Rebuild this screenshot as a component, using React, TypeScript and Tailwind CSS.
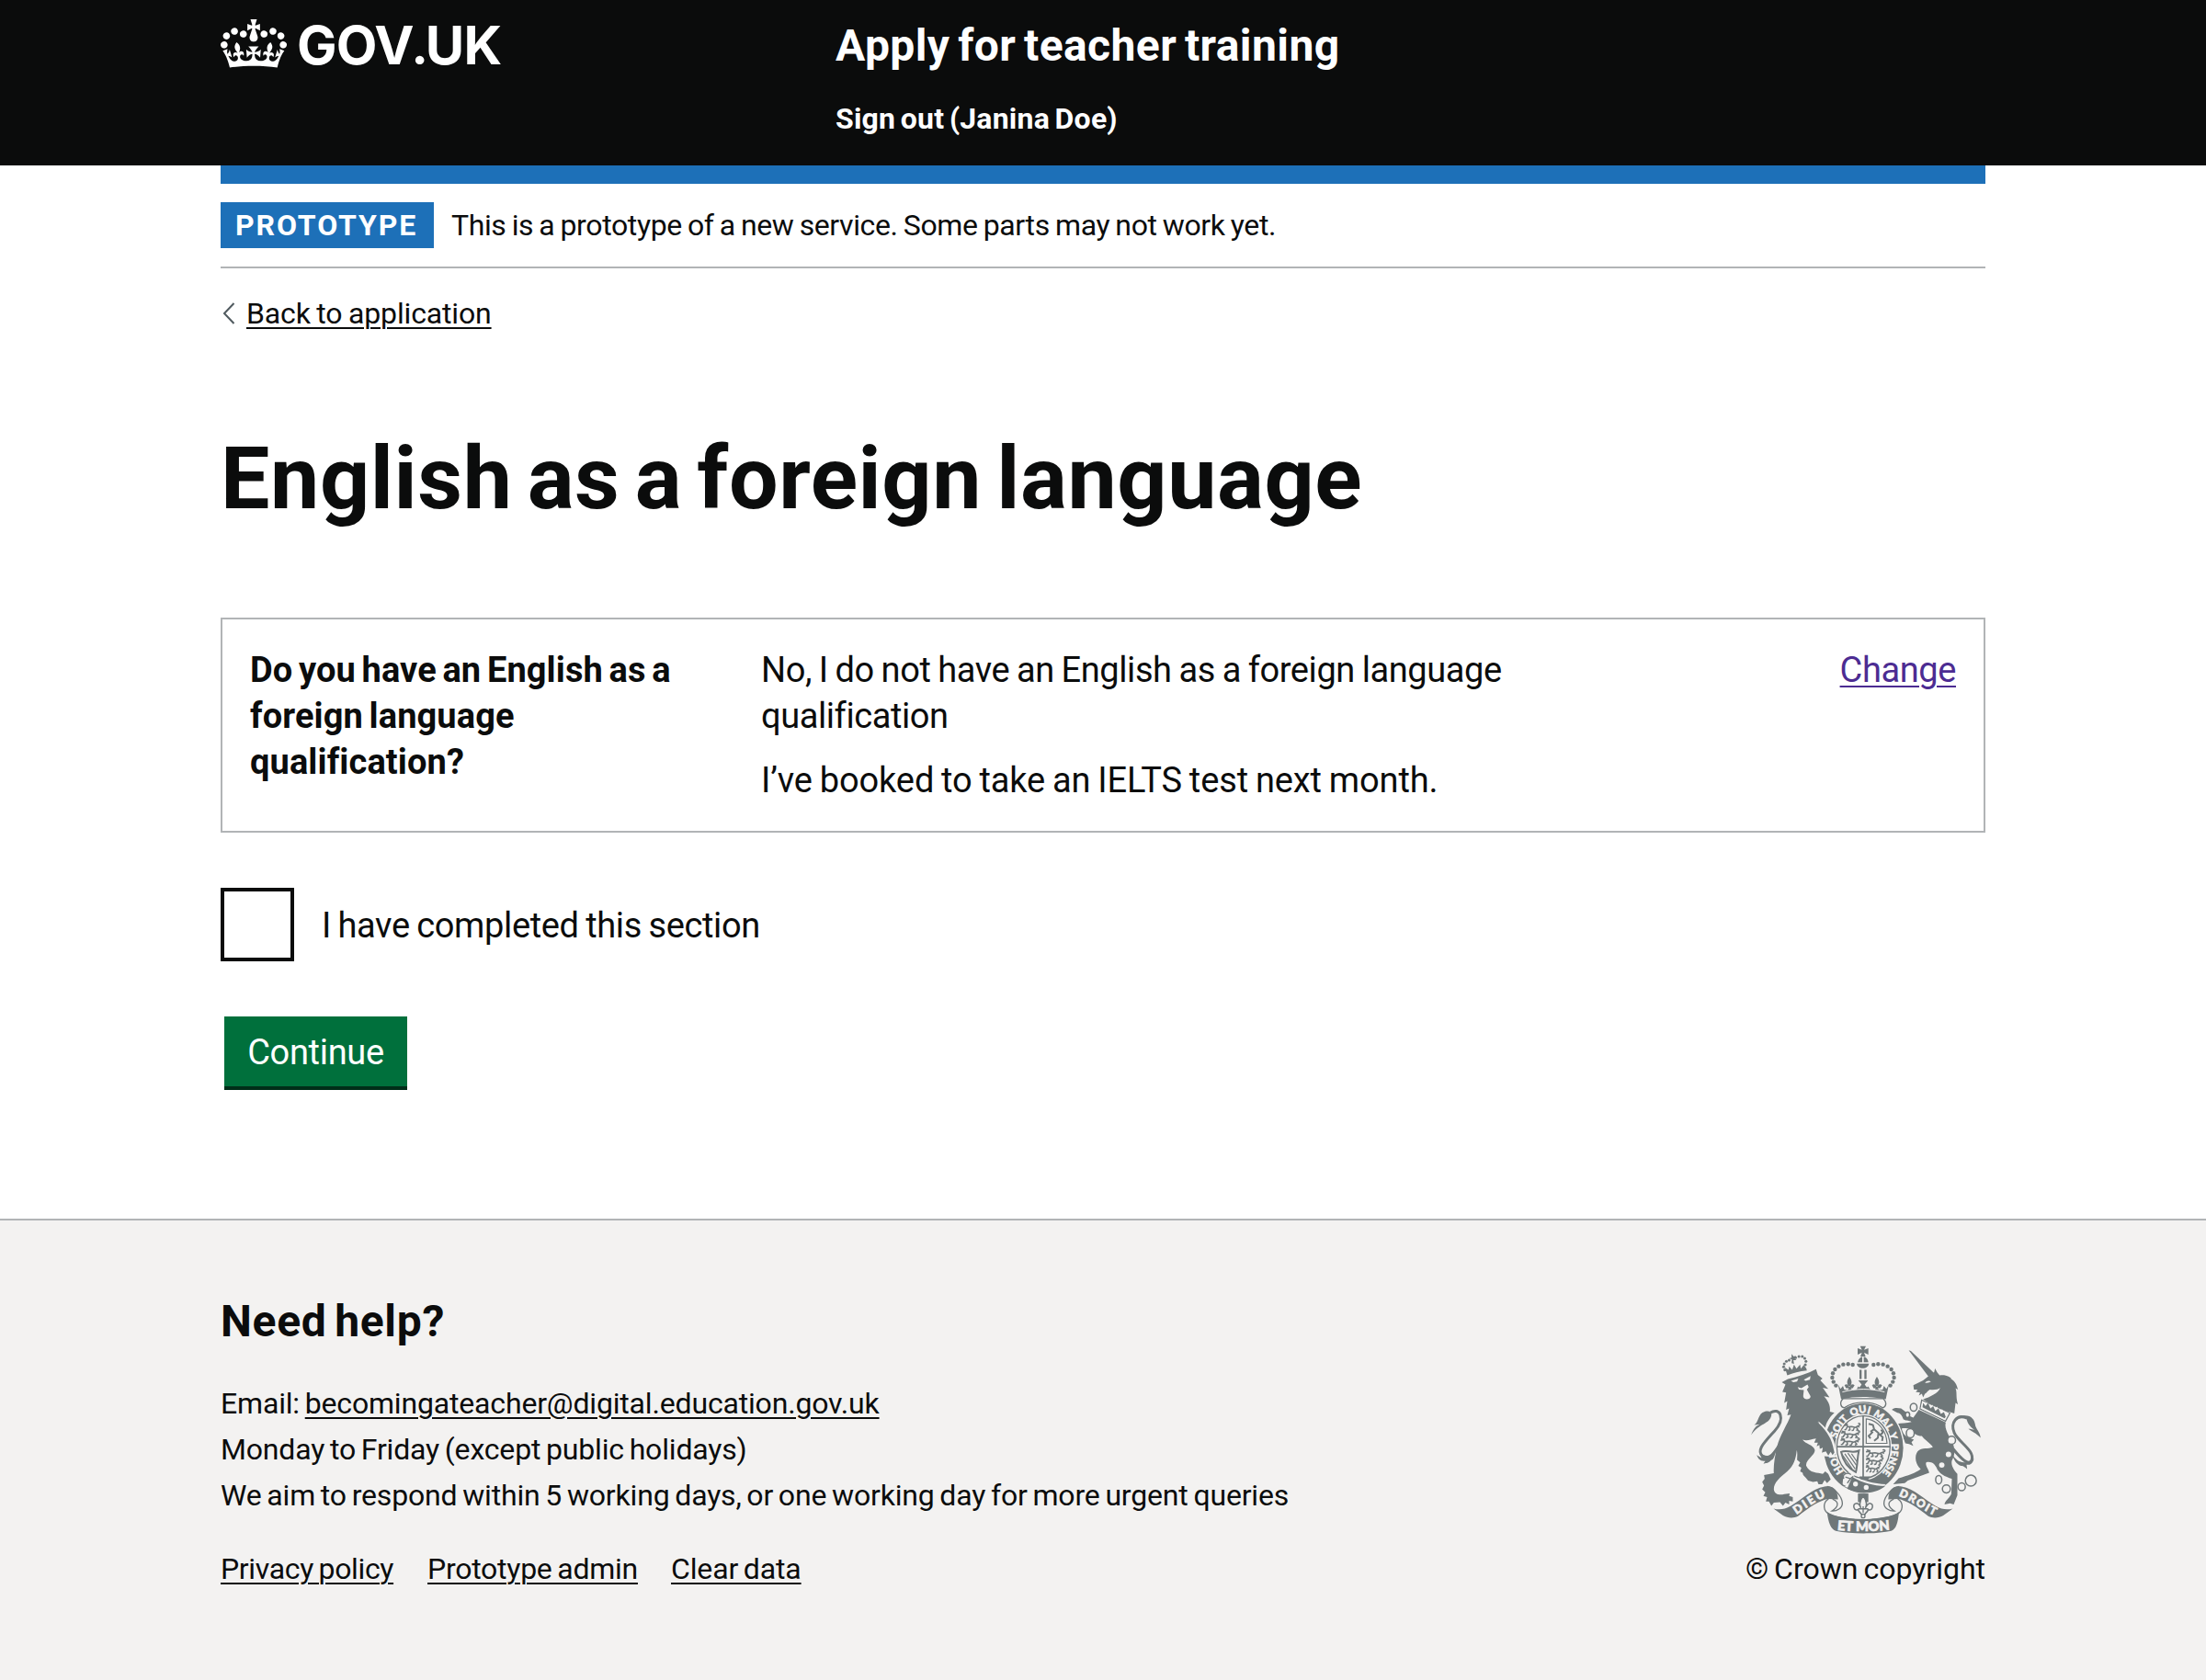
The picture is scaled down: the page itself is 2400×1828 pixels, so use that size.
const GREY = "#6f7779";
const PAPER = "#f3f2f1";

function CrownLogo() {
  return (
    <svg viewBox="0 0 132 97" className="mt-[21px] h-[53px] w-[72px] shrink-0" fill="#ffffff" aria-hidden="true">
      <path
        fillRule="evenodd"
        d="M25 30.2c3.5 1.5 7.7-.2 9.1-3.7 1.5-3.6-.2-7.8-3.9-9.2-3.6-1.4-7.6.3-9.1 3.9-1.4 3.5.3 7.5 3.9 9zM9 39.5c3.6 1.5 7.8-.2 9.2-3.7 1.5-3.6-.2-7.8-3.9-9.1-3.6-1.5-7.6.2-9.1 3.8-1.4 3.5.3 7.5 3.8 9zM4.4 57.2c3.5 1.5 7.7-.2 9.1-3.8 1.5-3.6-.2-7.7-3.9-9.1-3.5-1.5-7.6.3-9.1 3.8-1.4 3.5.3 7.6 3.9 9.1zm38.3-21.4c3.5 1.5 7.7-.2 9.1-3.8 1.5-3.6-.2-7.7-3.9-9.1-3.6-1.5-7.6.3-9.1 3.8-1.3 3.6.4 7.7 3.9 9.1zm64.4-5.6c-3.6 1.5-7.8-.2-9.1-3.7-1.5-3.6.2-7.8 3.8-9.2 3.6-1.4 7.7.3 9.2 3.9 1.3 3.5-.4 7.5-3.9 9zm15.9 9.3c-3.6 1.5-7.7-.2-9.1-3.7-1.5-3.6.2-7.8 3.7-9.1 3.6-1.5 7.7.2 9.2 3.8 1.5 3.5-.3 7.5-3.8 9zm4.7 17.7c-3.6 1.5-7.8-.2-9.2-3.8-1.5-3.6.2-7.7 3.9-9.1 3.6-1.5 7.7.3 9.2 3.8 1.3 3.5-.4 7.6-3.9 9.1zM89.3 35.8c-3.6 1.5-7.8-.2-9.2-3.8-1.4-3.6.2-7.7 3.9-9.1 3.6-1.5 7.7.3 9.2 3.8 1.4 3.6-.3 7.7-3.9 9.1zM69.7 17.7l8.9 4.7V9.3l-8.9 2.8c-.2-.3-.5-.6-.9-.9L72.4 0H59.6l3.5 11.2c-.3.3-.6.5-.9.9l-8.8-2.8v13.1l8.8-4.7c.3.3.6.7.9.9l-5 15.4v.1c-.2.8-.4 1.6-.4 2.4 0 4.1 3.1 7.5 7 8.1h.2c.3 0 .7.1 1 .1.4 0 .7 0 1-.1h.2c4-.6 7.1-4.1 7.1-8.1 0-.8-.1-1.7-.4-2.4V34l-5.1-15.4c.4-.2.7-.6 1-.9zM66 92.8c16.9 0 32.8 1.1 47.1 3.2 4-16.9 8.9-26.7 14-33.5l-9.6-3.4c1 4.9 1.1 7.2 0 10.2-1.5-1.4-3-4.3-4.2-8.7L108.6 76c2.8-2 5-3.2 7.5-3.3-4.4 9.4-10 11.9-13.6 11.2-4.3-.8-6.3-4.6-5.6-7.9 1-4.7 5.7-5.9 8-.5 4.3-8.7-3-11.4-7.6-8.8 7.1-7.2 7.9-13.5 2.1-21.1-8 6.1-8.1 12.3-4.5 20.8-4.7-5.4-12.1-2.5-9.5 6.2 3.4-5.2 7.9-2 7.2 3.1-.6 4.3-6.4 7.8-13.5 7.2-10.3-.9-10.9-8-11.2-13.8 2.5-.5 7.1 1.8 11 7.3L80.2 60c-4.1 4.4-8 5.3-12.3 5.4 1.4-4.4 8-11.6 8-11.6H55.5s6.4 7.2 7.9 11.6c-4.2-.1-8-1-12.3-5.4l1.4 16.4c3.9-5.5 8.5-7.7 10.9-7.3-.3 5.8-.9 12.8-11.1 13.8-7.2.6-12.9-2.9-13.5-7.2-.7-5 3.8-8.3 7.1-3.1 2.7-8.7-4.6-11.6-9.4-6.2 3.7-8.5 3.6-14.7-4.6-20.8-5.8 7.6-5 13.9 2.2 21.1-4.7-2.6-11.9.1-7.7 8.8 2.3-5.5 7.1-4.2 8.1.5.7 3.3-1.3 7.1-5.7 7.9-3.5.7-9-1.8-13.5-11.2 2.5.1 4.7 1.3 7.5 3.3l-4.7-15.4c-1.2 4.4-2.7 7.2-4.3 8.7-1.1-3-.9-5.3 0-10.2l-9.5 3.4c5 6.9 9.9 16.7 14 33.5 14.8-2.1 30.8-3.2 47.7-3.2z"
      />
    </svg>
  );
}

const crownBeads: [number, number][] = [
  [464, 133], [449, 131], [433, 132], [418, 138], [406, 148], [399, 161], [397, 175], [401, 189], [409, 201],
];
const lionCrownBeads: [number, number][] = [
  [256, 118], [247, 122], [240, 130], [238, 140], [242, 150], [277, 110], [288, 106], [299, 106], [307, 112], [311, 122], [309, 133],
];

function Ribbon() {
  return (
    <>
      <path
        fill={GREY}
        d="M205 603 C225 608 240 606 262 594 C300 572 330 539 372 531 C396 527 414 536 416 573 L385 572 C360 574 320 600 285 628 C270 636 250 634 236 626 Z"
      />
      <path
        fill="none"
        stroke={GREY}
        strokeWidth="4"
        d="M385 572 C368 580 366 604 380 617 C395 630 440 636 470 639 M380 531 C404 533 430 566 430 586 C430 602 412 612 396 611 C414 600 424 583 398 572"
      />
    </>
  );
}

function Walker({ x, y, s }: { x: number; y: number; s: number }) {
  return (
    <path
      transform={`translate(${x} ${y}) scale(${s} 1)`}
      fill="none"
      stroke={GREY}
      strokeWidth="4.6"
      strokeLinejoin="round"
      d="M2 6 L12 4 L16 10 L30 9 L44 12 L54 7 L58 12 M14 10 L8 19 L3 20 M22 10 L24 20 L17 22 M40 12 L36 21 L30 22 M48 12 L53 19 L47 22 M54 7 C66 4 60 -4 54 0 M4 0 L16 3"
    />
  );
}

function RoyalArms() {
  return (
    <svg viewBox="132 70 750 616" className="h-[205px] w-[250px]" role="img" aria-label="Royal coat of arms">
      {/* lion's tail */}
      <path fill="none" stroke={GREY} strokeWidth="9" d="M194 290 C226 270 246 308 208 350 C176 386 146 414 170 432 C196 450 214 410 246 362" />
      <path fill={GREY} d="M132 362 C142 338 148 334 160 328 L142 330 C158 318 154 292 176 286 C190 283 200 288 198 298 C192 328 160 322 132 362 Z" />
      <path fill={GREY} d="M150 428 L166 438 L160 424 C180 434 196 432 212 420 C206 436 206 442 196 446 C188 456 178 454 172 456 L178 448 C164 448 156 444 150 428 Z" />
      {/* lion */}
      <path
        fill={GREY}
        d="M232 190 L252 180 C284 172 316 162 344 147 L350 166 L365 178 L358 184 L384 212 L366 208 L388 240 L370 236 C384 252 392 268 389 286 L404 290 C386 306 376 324 374 342 L346 318 C372 344 398 372 402 396 C408 412 406 426 396 430 L390 420 L382 430 L374 418 L364 420 L366 404 L356 408 L358 394 L346 400 L350 388 L338 388 L344 374 C326 376 316 384 300 378 C308 392 336 394 340 412 C342 428 308 444 312 464 C322 488 350 486 366 490 L374 482 L384 490 L392 508 L380 520 L372 510 L364 524 L352 524 L348 514 L334 516 L318 512 L310 502 L302 494 L300 486 L292 482 L296 470 L286 464 L292 452 L282 444 C282 434 284 424 281 412 C278 440 272 462 250 482 C226 502 206 518 206 540 C208 558 226 560 240 556 L258 554 L256 562 L268 566 L268 580 L256 578 L256 590 L244 584 L236 594 L226 582 L206 584 L198 594 L190 580 L180 580 L184 566 L172 562 L178 550 L168 540 L174 528 L168 516 L176 506 L174 494 L206 488 C204 462 210 430 216 402 C226 362 250 330 262 296 L250 298 L256 276 L246 280 L250 252 L240 258 L246 224 L234 222 L244 198 Z"
      />
      <path fill={PAPER} d="M262 186 L286 178 L282 188 L270 190 Z M304 182 L326 170 L324 182 L310 186 Z M284 206 L296 210 L316 198 L320 206 L314 214 L326 236 C326 248 304 250 302 236 L304 216 L288 214 Z" />
      {/* lion's crown */}
      <g fill={GREY}>
        {lionCrownBeads.map(([x, y], i) => (
          <circle key={i} cx={x} cy={y} r="4.6" />
        ))}
        <path d="M242 142 L254 150 L256 138 L266 150 L272 132 L280 146 L292 132 L294 146 L304 134 L312 144 L314 152 C290 154 268 160 250 168 Z" />
        <path d="M264 98 L271 106 L278 104 L274 112 L280 118 L270 118 L272 130 L264 128 L265 116 L256 112 L264 110 Z" />
      </g>

      {/* unicorn's tail */}
      <path fill="none" stroke={GREY} strokeWidth="9" d="M838 308 C804 292 782 322 796 356 C808 384 864 414 853 444 C844 466 818 440 792 408" />
      <path fill={GREY} d="M820 300 C850 294 862 312 864 328 C866 344 880 352 882 372 C868 356 852 352 842 342 L862 346 C846 336 838 322 836 310 Z" />
      <path fill={GREY} d="M788 424 C800 444 812 452 828 452 C842 452 852 446 860 440 C858 450 854 456 846 460 L836 460 L838 474 C828 466 824 462 818 464 C802 458 794 444 788 424 Z" />
      {/* unicorn */}
      <path fill={GREY} d="M647 86 L654 88 L730 160 L712 172 Z" />
      <path
        fill={GREY}
        d="M694 184 L712 170 L730 158 L733 145 L740 158 L748 168 C768 164 784 174 788 180 L782 178 C800 186 804 200 808 214 L800 210 C806 226 800 240 808 262 L800 258 L796 292 C764 284 726 270 694 246 C716 238 744 226 750 208 C744 214 728 216 716 214 C708 218 706 226 700 228 L694 240 L690 228 L680 234 L684 224 L670 222 L676 214 L664 214 L662 200 Z"
      />
      <path fill={PAPER} d="M700 192 C706 184 714 184 720 188 C714 190 710 194 700 192 Z" />
      <path fill={GREY} d="M688 246 L784 290 L768 320 L682 278 Z" />
      <path fill={PAPER} d="M692 252 L702 268 L708 256 L716 274 L724 264 L732 280 L740 270 L748 288 L756 278 L764 294 L778 292 L766 314 L686 276 Z" />
      <path fill={PAPER} d="M691 251 L779 291 L766 315 L686 276 Z" />
      <path fill={GREY} d="M694 258 L702 268 L710 258 L718 276 L727 268 L734 284 L744 276 L752 294 L762 288 L768 304 L764 308 L692 272 Z" />
      <path
        fill={GREY}
        d="M680 280 L768 322 C762 344 780 366 792 392 C800 416 796 432 788 446 C784 462 796 478 806 490 L806 560 L794 590 L782 586 L764 590 C766 576 776 574 786 556 L788 506 C766 500 744 488 738 470 C732 458 722 448 704 452 C700 462 712 474 714 486 L644 512 L634 520 L596 524 L614 504 C642 496 672 486 686 474 C670 460 664 432 676 416 C690 402 712 410 726 402 C716 388 698 378 690 366 C674 366 658 354 654 344 C640 340 628 340 624 342 C628 358 634 366 648 372 L664 378 L656 386 L662 398 L648 392 L636 390 L628 370 C616 356 606 342 608 326 C622 324 642 324 656 320 C650 314 640 318 630 312 C624 298 622 292 610 290 L592 280 C598 272 612 274 622 276 L638 288 C644 300 652 302 662 306 Z"
      />
      {/* chain */}
      <g fill="none" stroke={GREY} strokeWidth="4.5">
        <ellipse cx="663" cy="272" rx="11" ry="13" />
        <ellipse cx="652" cy="357" rx="13" ry="15" fill={PAPER} />
        <ellipse cx="643" cy="297" rx="7" ry="9" fill={PAPER} />
        <circle cx="787" cy="380" r="13" fill={PAPER} />
        <ellipse cx="745" cy="509" rx="10" ry="14" />
        <circle cx="770" cy="539" r="13" />
        <ellipse cx="820" cy="532" rx="12" ry="13" fill={PAPER} />
        <circle cx="850" cy="512" r="18" />
      </g>
      <circle cx="777" cy="426" r="9" fill={PAPER} />
      <circle cx="755" cy="461" r="9" fill={PAPER} />

      {/* garter and shield */}
      <ellipse cx="499" cy="405" rx="134" ry="150" fill={PAPER} />
      <ellipse cx="499" cy="405" rx="130" ry="146" fill={GREY} />
      <ellipse cx="499" cy="402" rx="93" ry="108" fill={PAPER} />
      <ellipse cx="499" cy="402" rx="87" ry="102" fill="none" stroke={GREY} strokeWidth="4" />
      <path stroke={GREY} strokeWidth="5" d="M498 300 V506 M412 401 H586" />
      <Walker x={434} y={326} s={0.88} />
      <Walker x={424} y={350} s={1.02} />
      <Walker x={422} y={374} s={1.04} />
      <Walker x={505} y={412} s={1.05} />
      <Walker x={505} y={437} s={0.95} />
      <Walker x={505} y={462} s={0.78} />
      <path fill="none" stroke={GREY} strokeWidth="3.5" d="M508 310 C544 314 574 346 576 390 H508 Z" />
      <path fill="none" stroke={GREY} strokeWidth="6" strokeLinejoin="round" d="M516 326 L530 330 L534 344 L522 352 M534 344 L548 356 L546 372 L534 382 M548 358 L562 370 L560 382 M530 352 L516 366 L522 374 M556 346 C566 352 560 362 554 358" />
      <path fill="none" stroke={GREY} strokeWidth="6" d="M426 418 C444 410 462 424 484 414 C478 440 480 462 474 484 C450 472 432 448 426 418 Z" />
      <path stroke={GREY} strokeWidth="3.5" d="M438 424 L472 474 M448 422 L476 462 M460 424 L478 450 M432 430 L462 474" />
      <path fill={GREY} d="M486 498 H520 L514 510 H488 Z" />

      <path id="garter" fill="none" d="M499 519 A100 115 0 0 1 499 290 A100 115 0 0 1 499 519" />
      <g
        fill={PAPER}
        stroke={PAPER}
        strokeWidth="1.6"
        fontFamily="Lato, sans-serif"
        fontWeight="900"
        fontSize="33"
        textAnchor="middle"
      >
        <text><textPath href="#garter" startOffset="18%">HON</textPath></text>
        <text><textPath href="#garter" startOffset="35.6%">SOIT</textPath></text>
        <text><textPath href="#garter" startOffset="48.4%">QUI</textPath></text>
        <text><textPath href="#garter" startOffset="60.6%">MAL</textPath></text>
        <text><textPath href="#garter" startOffset="69.4%">Y</textPath></text>
        <text><textPath href="#garter" startOffset="81%">PENSE</textPath></text>
      </g>
      {/* paw over the garter */}
      <path fill={PAPER} d="M352 318 C382 344 400 366 406 396 L410 422 L400 434 L370 432 L366 420 Z" />
      <path fill={GREY} d="M346 318 C372 342 392 368 399 398 L404 420 L398 428 L392 418 L384 430 L376 416 L364 420 L366 404 L356 406 Z" />
      {/* buckle and strap */}
      <path fill={PAPER} d="M434 490 L462 484 L470 500 C500 514 540 522 572 524 L560 534 C520 532 480 520 462 512 L450 536 L430 530 Z" />
      <path fill={GREY} d="M462 500 C492 518 530 528 570 530 C540 556 480 560 446 538 Z" />
      <path fill="none" stroke={GREY} strokeWidth="4" d="M458 492 C446 484 430 490 434 504 C420 508 424 528 440 530 M440 500 L458 506 M446 520 C452 514 456 502 466 498" />
      <circle cx="473" cy="523" r="8" fill={PAPER} />
      <circle cx="508" cy="534" r="8" fill={PAPER} />

      {/* imperial crown */}
      <path fill={PAPER} stroke={GREY} strokeWidth="4" d="M432 244 C420 256 424 272 436 274 C470 250 528 250 562 274 C574 270 576 256 564 244 Z" />
      <g fill={GREY}>
        <path d="M416 198 L424 212 L432 202 L436 214 L448 216 L454 204 L462 216 L476 214 L482 204 L490 212 L506 212 L514 204 L522 214 L536 216 L542 204 L550 216 L562 214 L566 202 L574 212 L582 198 L572 246 C524 236 472 236 426 246 Z" />
        <path d="M453 172 C462 186 462 192 456 202 H450 C444 192 444 186 453 172 Z M543 172 C552 186 552 192 546 202 H540 C534 192 534 186 543 172 Z" />
        <path d="M482 184 H514 L503 198 L514 212 H482 L493 198 Z" />
        <path d="M437 200 C444 192 450 200 453 206 C456 200 462 192 470 200 L464 210 H442 Z M527 200 C534 192 540 200 543 206 C546 200 552 192 560 200 L554 210 H532 Z" />
        <path d="M486 150 H493 V180 H486 Z M502 150 H509 V180 H502 Z" />
        <path d="M477 129 H517 C516 138 508 144 497 144 C486 144 478 138 477 129 Z M480 125 C482 114 490 108 495 107 V125 Z M500 107 C506 108 514 114 515 125 H500 Z" />
        <path d="M488 72 H507 L501 84 L515 79 V100 L501 93 L506 106 H489 L494 93 L480 100 V79 L494 84 Z" />
        {crownBeads.map(([x, y], i) => (
          <g key={i}>
            <circle cx={x} cy={y} r="6.6" />
            <circle cx={996 - x} cy={y} r="6.6" />
          </g>
        ))}
      </g>
      <path fill="none" stroke={PAPER} strokeWidth="3" d="M430 222 C474 210 524 210 568 222" />

      {/* motto */}
      <Ribbon />
      <g transform="translate(996 0) scale(-1 1)">
        <Ribbon />
      </g>
      <path fill={GREY} d="M380 614 C420 646 576 646 615 614 C612 650 606 670 590 676 C540 687 460 687 408 676 C392 670 384 650 380 614 Z" />
      <path id="motto-left" fill="none" d="M274 627 C306 606 342 578 382 562" />
      <path id="motto-mid" fill="none" d="M400 671 C450 679 545 679 598 671" />
      <path id="motto-right" fill="none" d="M608 560 C656 576 690 608 736 628" />
      <g fill={PAPER} stroke={PAPER} strokeWidth="2" fontFamily="Lato, sans-serif" fontWeight="900" textAnchor="middle">
        <text fontSize="38"><textPath href="#motto-left" startOffset="50%" textLength="112">DIEU</textPath></text>
        <text fontSize="44"><textPath href="#motto-mid" startOffset="50%" textLength="172">ET MON</textPath></text>
        <text fontSize="36"><textPath href="#motto-right" startOffset="50%" textLength="134">DROIT</textPath></text>
      </g>
      <path fill={GREY} d="M481 554 H515 V582 H481 Z" />
      <path fill={PAPER} stroke={GREY} strokeWidth="4.5" strokeLinejoin="round" d="M498 562 C508 574 512 586 506 600 C514 580 532 584 528 600 C526 608 518 610 514 606 C514 614 506 616 504 622 H492 C490 616 482 614 482 606 C478 610 470 608 468 600 C464 584 482 580 490 600 C484 586 488 574 498 562 Z" />
      <path stroke={GREY} strokeWidth="4" d="M498 596 V618 M482 604 H514" />
      <circle cx="498" cy="628" r="6" fill={PAPER} stroke={GREY} strokeWidth="4" />
    </svg>
  );
}

const link = "underline decoration-2 underline-offset-[4px]";

export default function App() {
  return (
    <div className="flex h-[1828px] w-full flex-col overflow-hidden bg-white font-[Roboto,sans-serif] text-[32px] leading-[50px] text-[#0b0c0c]">
      <header className="h-[180px] shrink-0 bg-[#0b0c0c] text-white">
        <div className="mx-auto flex w-[1920px]">
          <a className="flex w-[670px] items-start">
            <CrownLogo />
            <span className="mt-[18px] ml-[11px] font-[Inter,sans-serif] text-[58px] leading-[60px] font-bold tracking-[-0.8px] whitespace-nowrap">
              GOV<span className="font-[Lato,sans-serif] font-black">.</span>UK
            </span>
          </a>
          <div className="flex flex-col pt-5 font-bold">
            <span className="-ml-px text-[48px] leading-[60px] tracking-[0.4px] [word-spacing:-3.5px]">Apply for teacher training</span>
            <span className="mt-6 -ml-px tracking-[0.2px] [word-spacing:-2.5px]">Sign out (Janina Doe)</span>
          </div>
        </div>
      </header>

      <div className="mx-auto w-[1920px] shrink-0">
        <div className="h-5 bg-[#1d70b8]" />
        <div className="flex items-center border-b-2 border-[#b1b4b6] py-5">
          <strong className="w-[232px] bg-[#1d70b8] pl-4 font-bold tracking-[1.9px] text-white">PROTOTYPE</strong>
          <span className="ml-[19px] tracking-[-0.38px] [word-spacing:-1.4px]">
            This is a prototype of a new service. Some parts may not work yet.
          </span>
        </div>

        <a className="mt-6 flex items-center">
          <svg viewBox="0 0 14 24" className="mr-[12px] ml-[2px] h-6 w-[14px]" fill="none" stroke="#505a5f" strokeWidth="2">
            <path d="M12.5 1 L2 12 L12.5 23" />
          </svg>
          <span className={`${link} tracking-[-0.15px] [word-spacing:-1.2px]`}>Back to application</span>
        </a>

        <main>
          <h1 className="mt-[105px] text-[95px] leading-[100px] font-bold tracking-[0.6px] [word-spacing:-8px]">
            English as a foreign language
          </h1>

          <dl className="mt-[101px] flex border-2 border-[#b1b4b6] p-[30px] text-[38px]">
            <dt className="w-[556px] font-bold tracking-[0.1px] [word-spacing:-2.9px]">
              Do you have an English as a<br />
              foreign language
              <br />
              qualification?
            </dt>
            <dd className="flex grow flex-col gap-5">
              <p className="tracking-[-0.42px] [word-spacing:-1.2px]">
                No, I do not have an English as a foreign language
                <br />
                qualification
              </p>
              <p className="tracking-[-0.1px] [word-spacing:-1.5px]">I’ve booked to take an IELTS test next month.</p>
            </dd>
            <dd>
              <a className={`${link} tracking-[-0.4px] text-[#4c2c92]`}>Change</a>
            </dd>
          </dl>

          <label className="mt-[60px] flex items-center text-[38px]">
            <span className="size-20 border-4 border-[#0b0c0c]" />
            <span className="ml-[30px] pt-0.5 tracking-[-0.35px] [word-spacing:-1.6px]">I have completed this section</span>
          </label>

          <button className="mt-[60px] ml-1 block h-[76px] w-[199px] bg-[#00703c] pt-[2px] text-[38px] leading-[74px] tracking-[-0.3px] text-white shadow-[0_4px_0_#002d18]">
            Continue
          </button>
        </main>
      </div>

      <footer className="mt-[144px] grow border-t-2 border-[#b1b4b6] bg-[#f3f2f1] pt-20">
        <div className="mx-auto flex w-[1920px] items-end justify-between">
          <div>
            <h2 className="mb-[34px] text-[48px] leading-[60px] font-bold tracking-[0.7px] [word-spacing:-4px]">Need help?</h2>
            <ul className="tracking-[-0.17px] [word-spacing:-2px]">
              <li>
                Email: <a className={link}>becomingateacher@digital.education.gov.uk</a>
              </li>
              <li>Monday to Friday (except public holidays)</li>
              <li>We aim to respond within 5 working days, or one working day for more urgent queries</li>
            </ul>
            <div className="mt-[30px] flex [word-spacing:-2px]">
              <a className={`${link} w-[188px] tracking-[-0.35px] whitespace-nowrap`}>Privacy policy</a>
              <a className={`${link} ml-[37px] w-[228px] tracking-[-0.26px] whitespace-nowrap`}>Prototype admin</a>
              <a className={`${link} ml-[37px] tracking-[-0.15px] whitespace-nowrap`}>Clear data</a>
            </div>
          </div>
          <div className="flex flex-col items-center">
            <RoyalArms />
            <span className="mt-[13px] [word-spacing:-2px]">© Crown copyright</span>
          </div>
        </div>
      </footer>
    </div>
  );
}
